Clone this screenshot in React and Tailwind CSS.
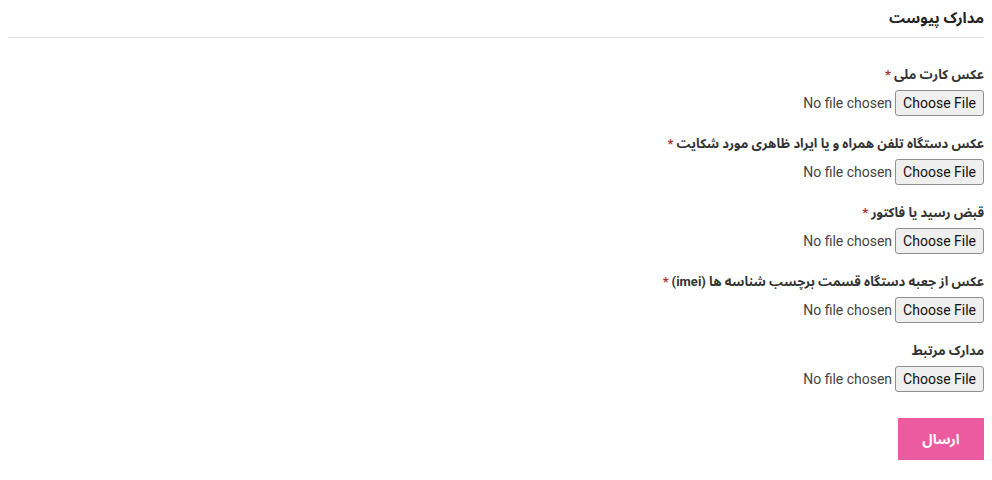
import React from "react";

const fields = [
  { label: "عکس کارت ملی", required: true },
  { label: "عکس دستگاه تلفن همراه و یا ایراد ظاهری مورد شکایت", required: true },
  { label: "قبض رسید یا فاکتور", required: true },
  { label: "عکس از جعبه دستگاه قسمت برچسب شناسه ها (imei)", required: true },
  { label: "مدارک مرتبط", required: false },
];

const FileField = ({ label, required }) => (
  <div className="flex flex-col items-start">
    <label className="text-[13px] font-bold text-[#333] leading-5">
      {label}
      {required && <span className="text-[#a33] mr-[3px]">*</span>}
    </label>
    <div className="flex items-center mt-[5px]">
      <button className="h-[26px] px-[7px] border border-[#8f8f8f] rounded-[3px] bg-[#efefef] text-[14px] text-[#111] font-['Roboto',sans-serif]">
        Choose File
      </button>
      <span className="mr-[3px] text-[14px] text-[#444] font-['Roboto',sans-serif]">
        No file chosen
      </span>
    </div>
  </div>
);

const App = () => {
  return (
    <div
      dir="rtl"
      className="w-[992px] h-[480px] bg-white px-2 pt-[6px] font-['Roboto','Noto_Sans_Arabic','DejaVu_Sans',sans-serif]"
    >
      <h2 className="text-[15px] font-bold text-[#222] leading-6 pb-[7px] border-b border-[#ddd]">
        مدارک پیوست
      </h2>
      <div className="flex flex-col gap-[18px] mt-[27px]">
        {fields.map((f) => (
          <FileField key={f.label} {...f} />
        ))}
      </div>
      <button className="mt-[26px] w-[86px] h-[42px] bg-[#ec5a9f] text-white text-[14px] font-bold">
        ارسال
      </button>
    </div>
  );
};

export default App;
